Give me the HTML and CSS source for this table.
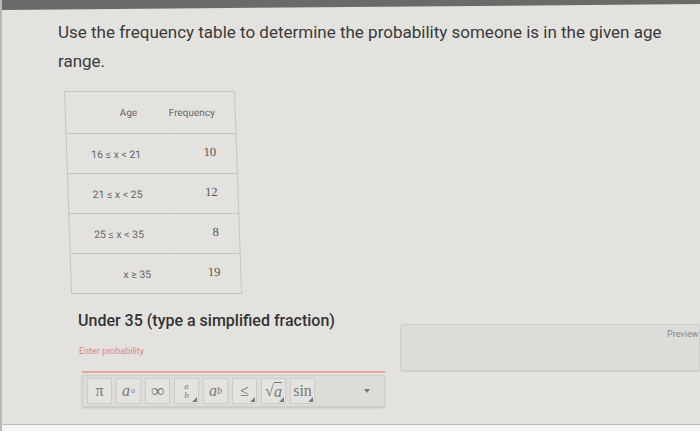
FILE: index.html
```html
<!DOCTYPE html>
<html>
<head>
<meta charset="utf-8">
<link rel="stylesheet" href="styles.css">
</head>
<body>
<div class="topbar"></div>
<div class="page">
  <p class="question">Use the frequency table to determine the probability someone is in the given age range.</p>
  <table class="freq">
    <tr class="head"><th class="age-h">Age</th><th class="freq-h">Frequency</th></tr>
    <tr><td class="age">16 ≤ x &lt; 21</td><td class="num">10</td></tr>
    <tr><td class="age">21 ≤ x &lt; 25</td><td class="num">12</td></tr>
    <tr><td class="age">25 ≤ x &lt; 35</td><td class="num">8</td></tr>
    <tr><td class="age last">x ≥ 35</td><td class="num">19</td></tr>
  </table>
  <div class="answer-row">
    <div class="answer">
      <div class="prompt">Under 35 (type a simplified fraction)</div>
      <div class="hint">Enter probability</div>
      <div class="input-line"></div>
      <div class="toolbar">
        <span class="btn">π</span>
        <span class="btn"><i>a</i><sup class="deg">o</sup></span>
        <span class="btn big">∞</span>
        <span class="btn more frac"><i>a</i><i>b</i></span>
        <span class="btn"><i>a</i><sup><i>b</i></sup></span>
        <span class="btn more">≤</span>
        <span class="btn more">√<i class="over">a</i></span>
        <span class="btn more">sin</span>
        <span class="caret"></span>
      </div>
    </div>
    <div class="preview"><span>Preview</span></div>
  </div>
</div>
<div class="bottom"></div>
</body>
</html>
```
FILE: styles.css
```css
html, body {
  margin: 0;
  padding: 0;
}
body {
  width: 700px;
  height: 431px;
  overflow: hidden;
  background: #e3e2de;
  font-family: Roboto, "Liberation Sans", sans-serif;
  color: #3b3b3b;
  border-left: 2px solid #b9b8b4;
  box-sizing: border-box;
  position: relative;
}
.topbar {
  height: 10px;
  background: #6a6a68;
  clip-path: polygon(0 0, 100% 0, 100% 40%, 0 100%);
}
.page {
  padding-left: 56px;
}
.question {
  margin: 8px 0 0;
  width: 620px;
  font-size: 17px;
  line-height: 29px;
  color: #3a3a3a;
}
.freq {
  margin: 15px 0 0 6px;
  border-collapse: collapse;
  width: 171px;
  transform: skewX(2deg);
  transform-origin: top left;
  font-size: 10px;
  color: #666;
}
.freq tr {
  height: 40px;
  border: 1px solid #c6c5c1;
}
.freq tr.head {
  height: 42px;
}
.freq th {
  font-weight: normal;
  padding: 0;
}
.freq th.age-h {
  text-align: left;
  padding-left: 54px;
  width: 49px;
}
.freq-h {
  text-align: left;
}
.age {
  padding-left: 24px;
  font-size: 10.5px;
}
.freq td.age.last {
  padding-left: 52px;
}
.num {
  text-align: right;
  padding-right: 20px;
  font-family: "Liberation Serif", serif;
  font-size: 12.5px;
  color: #555;
  vertical-align: top;
  padding-top: 11px;
}
.freq td.age {
  vertical-align: top;
  padding-top: 14px;
}
.answer-row {
  display: flex;
  gap: 15px;
  margin-top: 17px;
  margin-left: 20px;
}
.answer {
  width: 307px;
  flex: none;
}
.prompt {
  font-size: 16px;
  font-weight: 500;
  color: #333;
  line-height: 20px;
}
.hint {
  margin-top: 14px;
  font-size: 9px;
  color: #d58a86;
  line-height: 12px;
  padding-left: 1px;
}
.input-line {
  margin-top: 14px;
  margin-left: 4px;
  height: 2px;
  background: #e6a7a4;
}
.toolbar {
  margin-top: 2px;
  margin-left: 4px;
  height: 32px;
  background: #dddcd7;
  border: 1px solid #cfcec9;
  box-shadow: 0 1px 2px rgba(0,0,0,0.15);
  display: flex;
  align-items: center;
  gap: 4px;
  padding-left: 4px;
  box-sizing: border-box;
  position: relative;
}
.btn {
  width: 25px;
  height: 26px;
  box-sizing: border-box;
  border: 1px solid #cdccc7;
  background: #e4e3df;
  display: flex;
  align-items: center;
  justify-content: center;
  font-family: "Liberation Serif", serif;
  font-size: 16px;
  color: #777;
  position: relative;
}
.btn.big {
  font-size: 19px;
}
.btn sup {
  font-size: 10px;
  line-height: 0;
  vertical-align: 6px;
}
.btn sup.deg {
  font-size: 8px;
  margin-left: 1px;
}
.btn.more::after {
  content: "";
  position: absolute;
  right: 1px;
  bottom: 1px;
  border-style: solid;
  border-width: 0 0 5px 5px;
  border-color: transparent transparent #777 transparent;
}
.frac {
  flex-direction: column;
}
.btn.frac {
  font-size: 9px;
  line-height: 9px;
}
.over {
  border-top: 1px solid #777;
}
.caret {
  position: absolute;
  right: 14px;
  top: 13px;
  border-style: solid;
  border-width: 4px 3px 0 3px;
  border-color: #777 transparent transparent transparent;
}
.preview {
  margin-top: 13px;
  width: 320px;
  height: 47px;
  box-sizing: border-box;
  border: 1px solid #cfcec9;
  border-radius: 3px;
  background: #dedcd8;
  box-shadow: 0 1px 1px rgba(0,0,0,0.08);
  position: relative;
}
.preview span {
  position: absolute;
  left: 266px;
  top: 4px;
  font-size: 9px;
  color: #888;
}
.bottom {
  position: absolute;
  left: 0;
  right: 0;
  bottom: 0;
  height: 6px;
  background: #f4f4f2;
  border-top: 1px solid #bdbcb8;
}
```
